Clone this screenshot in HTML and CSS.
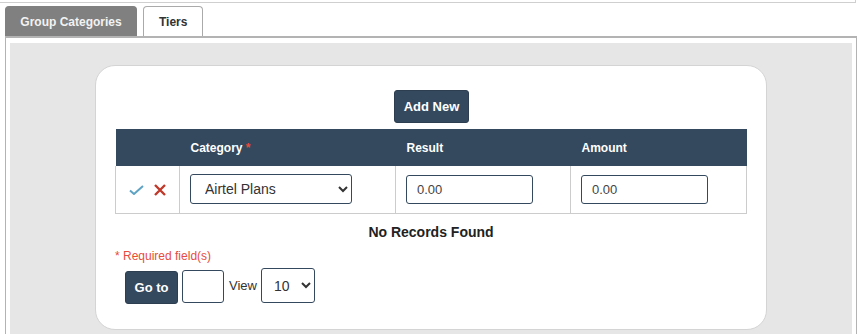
FILE: index.html
```html
<!DOCTYPE html>
<html lang="en">
<head>
    <meta charset="UTF-8">
    <title>Group Categories</title>

    <link rel="stylesheet" href="styles.css">

</head>
<body>

<div class="topbox"></div>

<div class="tabs">
    <div class="tab active">Group Categories</div>
    <div class="tab">Tiers</div>
</div>

<div class="panel">
    <div class="panel-inner">
        <div class="card">
            <div class="actions">
                <button class="btn">Add New</button>
            </div>
            <table class="grid">
                <thead>
                <tr>
                    <th class="col-icons"></th>
                    <th class="col-cat">Category <span class="req">*</span></th>
                    <th class="col-res">Result</th>
                    <th class="col-amt">Amount</th>
                </tr>
                </thead>
                <tbody>
                <tr>
                    <td class="icons">
                        <!-- save / cancel -->
                        <svg class="ok" width="15" height="10" viewBox="0 0 15 10">
                            <path d="M1 5.5 L5 9 L14 1" fill="none" stroke="#5fa3c4" stroke-width="2"/>
                        </svg>
                        <svg class="no" width="12" height="12" viewBox="0 0 12 12">
                            <path d="M1 1 L11 11 M11 1 L1 11" fill="none" stroke="#c0392b" stroke-width="2.4"/>
                        </svg>
                    </td>
                    <td>
                        <select class="field sel-cat">
                            <option>Airtel Plans</option>
                        </select>
                    </td>
                    <td><input class="field txt" type="text" value="0.00"></td>
                    <td><input class="field txt" type="text" value="0.00"></td>
                </tr>
                </tbody>
            </table>
            <div class="empty">No Records Found</div>
            <div class="required">* Required field(s)</div>
            <div class="pager">
                <button class="btn go">Go to</button>
                <input class="field page" type="text">
                <span class="view">View</span>
                <select class="field sel-view">
                    <option>10</option>
                </select>
            </div>
        </div>
    </div>
</div>

</body>
</html>
```

FILE: styles.css
```css
body {
    margin: 0;
    font-family: "Liberation Sans", Arial, sans-serif;
    font-size: 13px;
    color: #333;
    background: #fff;
    overflow: hidden;
}

.topbox {
    width: 855px;
    height: 2px;
    border-bottom: 1px solid #cfcfcf;
    border-right: 1px solid #cfcfcf;
    box-sizing: content-box;
}

.tabs {
    display: flex;
    gap: 6px;
    padding: 3px 0 0 5px;
}

.tab {
    height: 30px;
    line-height: 30px;
    padding: 0 15px;
    font-size: 12px;
    font-weight: bold;
    color: #333;
    background: #fff;
    border: 1px solid #aaa;
    border-bottom: none;
    border-radius: 4px 4px 0 0;
    box-sizing: border-box;
}

.tab.active {
    width: 132px;
    padding: 0;
    text-align: center;
    background: #808080;
    border-color: #808080;
    color: #f2f2f2;
}

.panel {
    width: 852px;
    margin-left: 5px;
    border: 1px solid #b3b3b3;
    border-top: 2px solid #b3b3b3;
    border-bottom: none;
    padding: 5px 4px 0 4px;
    box-sizing: border-box;
}

.panel-inner {
    background: #e6e6e6;
    padding: 22px 0 4px 0;
    height: 300px;
    box-sizing: border-box;
}

.card {
    width: 672px;
    margin: 0 auto;
    background: #fff;
    border: 1px solid #d4d4d4;
    border-radius: 20px;
    padding: 24px 19px 25px 19px;
    box-sizing: border-box;
}

.actions {
    text-align: center;
    margin-bottom: 6px;
}

.btn {
    font-family: "Liberation Sans", Arial, sans-serif;
    font-size: 13px;
    font-weight: bold;
    color: #fff;
    background: #34495e;
    border: 1px solid #2c3e50;
    border-radius: 3px;
    height: 33px;
    padding: 0 9px;
    margin-left: 1px;
}

.grid {
    width: 632px;
    border-collapse: collapse;
}

.grid th {
    background: #34495e;
    color: #fff;
    font-size: 12px;
    font-weight: bold;
    text-align: left;
    height: 37px;
    padding: 0 0 0 11px;
}

.req {
    color: #e74c3c;
}

.col-icons { width: 53px; }
.col-cat { width: 205px; }
.col-res { width: 164px; }

.grid td {
    height: 47px;
    border: 1px solid #cccccc;
    border-top: none;
    padding: 0 0 0 10px;
    box-sizing: border-box;
}

.icons {
    white-space: nowrap;
}

.icons .ok {
    margin-left: 3px;
    vertical-align: middle;
}

.icons .no {
    margin-left: 6px;
    vertical-align: middle;
}

.field {
    font-family: "Liberation Sans", Arial, sans-serif;
    font-size: 13px;
    color: #444;
    border: 1px solid #34495e;
    border-radius: 3px;
    background: #fff;
    box-sizing: border-box;
}

.sel-cat {
    width: 162px;
    height: 30px;
    padding-left: 10px;
    font-size: 14px;
    color: #333;
}

.txt {
    width: 127px;
    height: 29px;
    padding: 0 10px;
}

.empty {
    text-align: center;
    font-size: 14px;
    font-weight: bold;
    color: #222;
    margin-top: 10px;
}

.required {
    color: #e74c3c;
    font-size: 12px;
    margin-top: 9px;
}

.pager {
    display: flex;
    align-items: center;
    gap: 4px;
    margin: 5px 0 0 10px;
}

.btn.go {
    width: 53px;
    padding: 0;
    margin-left: 0;
    margin-top: 3px;
}

.page {
    width: 42px;
    height: 33px;
    margin-top: 1px;
}

.view {
    font-size: 13px;
    color: #333;
    margin-left: 1px;
}

.sel-view {
    width: 54px;
    height: 35px;
    padding-left: 8px;
    font-size: 14px;
    color: #333;
    margin-left: 0;
}
```
